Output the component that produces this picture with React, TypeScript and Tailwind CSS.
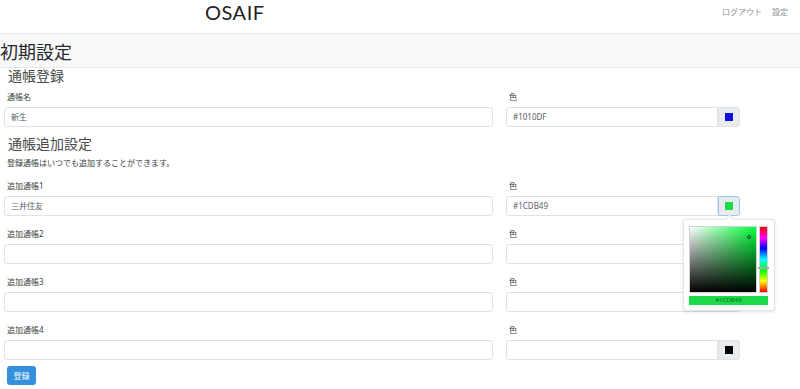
import React from 'react';

const jp = { fontFamily: '"Noto Sans", "Noto Sans CJK JP", sans-serif' };

const ColorInput = ({ value, swatch, focused }: { value: string; swatch?: string; focused?: boolean }) => (
  <div className="flex h-[20px] w-[234px]">
    <div className="flex-1 flex items-center px-[6px] text-[8px] text-[#5a6168] bg-white border border-[#dfe2e6] rounded-l-[3px]">
      {value}
    </div>
    <div
      className={`w-[22px] flex items-center justify-center bg-[#e9ecef] border rounded-r-[3px] ${
        focused ? 'border-[#9fc3ec]' : 'border-[#dfe2e6]'
      }`}
    >
      {swatch && <span className="block w-[8px] h-[8px]" style={{ background: swatch }} />}
    </div>
  </div>
);

const Row = ({ label, name, color, swatch, focused }: { label: string; name: string; color: string; swatch?: string; focused?: boolean }) => (
  <div className="flex gap-[13px]">
    <div className="w-[489px]">
      <div className="h-[12px] leading-[12px] text-[8px] text-[#3a3f44] pl-[3px]">{label}</div>
      <div className="mt-[4px] h-[20px] flex items-center px-[6px] text-[8px] text-[#5a6168] bg-white border border-[#dfe2e6] rounded-[3px]">
        {name}
      </div>
    </div>
    <div>
      <div className="h-[12px] leading-[12px] text-[8px] text-[#3a3f44] pl-[3px]">色</div>
      <div className="mt-[4px]">
        <ColorInput value={color} swatch={swatch} focused={focused} />
      </div>
    </div>
  </div>
);

export default function App() {
  return (
    <div className="relative w-[800px] h-[389px] overflow-hidden bg-white text-[#212529]" style={jp}>
      <header className="h-[33px] flex items-start bg-white">
        <div className="ml-[205px] mt-[1px] text-[20px] leading-[22px] text-[#222] tracking-[0.5px]" style={{ fontFamily: 'Lato, "Noto Sans", sans-serif' }}>
          OSAIF
        </div>
        <nav className="ml-auto mr-[12px] mt-[6px] flex gap-[10px] text-[8px] leading-[12px] text-[#8a8f94]">
          <span>ログアウト</span>
          <span>設定</span>
        </nav>
      </header>

      <div className="h-[35px] bg-[#f8f9fa] border-t border-b border-[#e6e8ea] flex items-center">
        <h1 className="text-[18px] leading-[22px] text-[#2a2a2a] mt-[2px]">初期設定</h1>
      </div>

      <div className="px-[4px]">
        <h2 className="pl-[4px] text-[14px] leading-[16px] text-[#4a4a4a]">通帳登録</h2>
        <div className="mt-[7px]">
          <Row label="通帳名" name="新生" color="#1010DF" swatch="#1010df" />
        </div>

        <h2 className="mt-[8px] pl-[4px] text-[14px] leading-[17px] text-[#4a4a4a]">通帳追加設定</h2>
        <p className="mt-[5px] pl-[3px] text-[8px] leading-[12px] text-[#3a3f44]">登録通帳はいつでも追加することができます。</p>

        <div className="mt-[11px] flex flex-col gap-[12px]">
          <Row label="追加通帳1" name="三井住友" color="#1CDB49" swatch="#1cdb49" focused />
          <Row label="追加通帳2" name="" color="" />
          <Row label="追加通帳3" name="" color="" />
          <Row label="追加通帳4" name="" color="" swatch="#000000" />
        </div>

        <button className="mt-[6px] ml-[3px] w-[29px] h-[19px] rounded-[3px] bg-[#3490dc] text-white text-[8px] leading-[19px]">
          登録
        </button>
      </div>

      {/* color picker popover */}
      <div className="absolute left-[683px] top-[219px] w-[92px] h-[92px] bg-white border border-[#e2e4e6] rounded-[3px] shadow-[0_1px_3px_rgba(0,0,0,0.12)]">
        <div className="absolute -top-[4px] left-[42px] w-[7px] h-[7px] bg-white border-l border-t border-[#e2e4e6] rotate-45" />
        <div className="absolute left-[5px] top-[6px] w-[68px] h-[67px] border border-[#cfd2d4]">
          <div className="absolute inset-0" style={{ background: '#00ff3a' }} />
          <div className="absolute inset-0" style={{ background: 'linear-gradient(to right, #fff, rgba(255,255,255,0))' }} />
          <div className="absolute inset-0" style={{ background: 'linear-gradient(to top, #000, rgba(0,0,0,0))' }} />
          <div className="absolute left-[57px] top-[8px] w-[4px] h-[4px] rounded-full border border-[#333]" />
        </div>
        <div
          className="absolute left-[75px] top-[6px] w-[9px] h-[67px] border border-[#cfd2d4]"
          style={{ background: 'linear-gradient(to bottom, #f00 0%, #f0f 17%, #00f 33%, #0ff 50%, #0f0 67%, #ff0 83%, #f00 100%)' }}
        >
          <div className="absolute left-[-2px] right-[-2px] top-[40px] h-[2px] bg-[#eee] border-y border-[#aaa]" />
        </div>
        <div className="absolute left-[5px] top-[76px] w-[79px] h-[9px] bg-[#1cdb49] text-[6px] leading-[9px] text-center text-[#1a6b2c]">
          #1CDB49
        </div>
      </div>
    </div>
  );
}
